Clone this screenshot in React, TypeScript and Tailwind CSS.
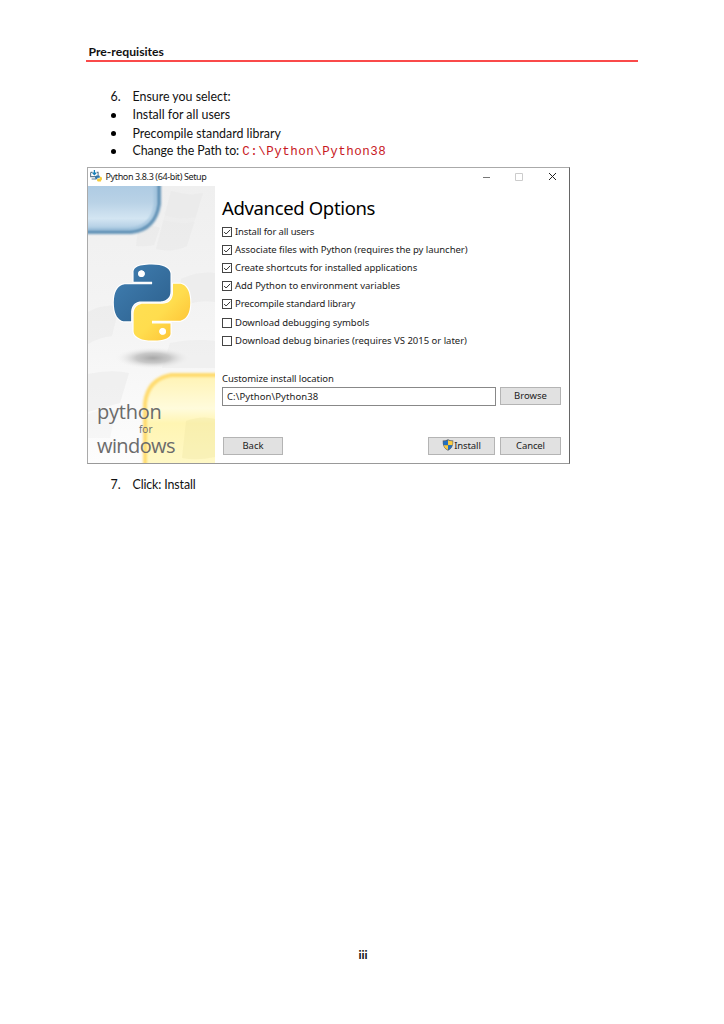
import React from "react";

const snake =
  "M14.25.18l.9.2.73.26.59.3.45.32.34.34.25.34.16.33.1.3.04.26.02.2-.01.13V8.5l-.05.63-.13.55-.21.46-.26.38-.3.31-.33.25-.35.19-.35.14-.33.1-.3.07-.26.04-.21.02H8.77l-.69.05-.59.14-.5.22-.41.27-.33.32-.27.35-.2.36-.15.37-.1.35-.07.32-.04.27-.02.21v3.06H3.17l-.21-.03-.28-.07-.32-.12-.35-.18-.36-.26-.36-.36-.35-.46-.32-.59-.28-.73-.21-.88-.14-1.05-.05-1.23.06-1.22.16-1.04.24-.87.32-.71.36-.57.4-.44.42-.33.42-.24.4-.16.36-.1.32-.05.24-.01h.16l.06.01h8.16v-.83H6.18l-.01-2.75-.02-.37.05-.34.11-.31.17-.28.25-.26.31-.23.38-.2.44-.18.51-.15.58-.12.64-.1.71-.06.77-.04.84-.02 1.27.05zm-6.3 1.98l-.23.33-.08.41.08.41.23.34.33.22.41.09.41-.09.33-.22.23-.34.08-.41-.08-.41-.23-.33-.33-.22-.41-.09-.41.09z";

function SidebarArt() {
  return (
    <svg className="absolute inset-0" width="127" height="277" viewBox="0 0 127 277">
      <defs>
        <linearGradient id="bg" x1="0" y1="0" x2="0" y2="1">
          <stop offset="0" stopColor="#efefef" />
          <stop offset=".5" stopColor="#f4f4f4" />
          <stop offset="1" stopColor="#fdfdfd" />
        </linearGradient>
        <linearGradient id="glass" x1="0" y1="0" x2="0" y2="1">
          <stop offset="0" stopColor="#a9c8e2" />
          <stop offset=".45" stopColor="#b9d2e6" />
          <stop offset=".75" stopColor="#d3e5f2" />
          <stop offset="1" stopColor="#a5c5df" />
        </linearGradient>
        <linearGradient id="gold" x1="0" y1="0" x2="0" y2="1">
          <stop offset="0" stopColor="#fff3b4" />
          <stop offset=".35" stopColor="#fffbdc" />
          <stop offset=".5" stopColor="#fff5b3" />
          <stop offset="1" stopColor="#fff9c9" />
        </linearGradient>
        <linearGradient id="blue" x1="0" y1="0" x2="1" y2="1">
          <stop offset="0" stopColor="#4180b3" />
          <stop offset="1" stopColor="#2c5f8c" />
        </linearGradient>
        <linearGradient id="yellow" x1="1" y1="1" x2="0" y2="0">
          <stop offset="0" stopColor="#ffe055" />
          <stop offset=".5" stopColor="#ffdd4e" />
          <stop offset="1" stopColor="#fdb92c" />
        </linearGradient>
        <radialGradient id="shadow">
          <stop offset="0" stopColor="#a8a8a8" />
          <stop offset=".45" stopColor="#c4c4c4" stopOpacity=".9" />
          <stop offset="1" stopColor="#f5f5f5" stopOpacity="0" />
        </radialGradient>
        <filter id="soft" x="-20%" y="-20%" width="140%" height="140%">
          <feGaussianBlur stdDeviation="1.3" />
        </filter>
        <pattern id="hatch" width="4" height="2" patternUnits="userSpaceOnUse" patternTransform="rotate(-38)">
          <path d="M0 1h4" stroke="#e0e0e0" strokeWidth=".5" />
        </pattern>
      </defs>
      <rect width="127" height="277" fill="url(#bg)" />
      <g fill="#ebebeb" opacity=".3">
        <path d="M83 5q18 5 32 2l-7 24q-16 4-32-2zM75 34q17 5 32 2l-8 24q-14 7-31 3zM50 43q12-6 22-1l-6 17q-9 2-18 1z" />
        <path d="M93 93q18-8 34-6v29q-19-3-36 6zM0 126q16-9 31-5l-7 29q-12 1-24 8zM0 188q23-5 41-1l-9 30q-16 4-32 9zM82 157q24-5 45-2v27H74zM0 228q14-6 28-4l-6 28H0z" />
      </g>
      <path
        fill="url(#hatch)"
        opacity=".7"
        d="M83 5q18 5 32 2l-16 53q-14 7-31 3zM50 43q12-6 22-1l-6 17q-9 2-18 1zM93 93q18-8 34-6v29q-19-3-36 6zM0 126q16-9 31-5l-7 29q-12 1-24 8zM0 188q23-5 41-1l-9 30q-16 4-32 9zM82 157q24-5 45-2v27H74z"
      />
      <path d="M-5-8H71V18Q67 43 43 46H-5Z" fill="url(#glass)" />
      <path d="M-5 46H43Q67 44 71 18V-5" fill="none" stroke="#6594b8" strokeWidth="4" filter="url(#soft)" />
      <path d="M-5 43H41Q64 41 67 18V-5" fill="none" stroke="#9abfda" strokeWidth="1.5" filter="url(#soft)" />
      <path d="M57 285V217Q60 193 83 189H135V285Z" fill="url(#gold)" />
      <path d="M98 235q16-6 29-2v38q-18 4-33 1z" fill="#efe6a4" opacity=".35" />
      <path d="M57 285V217Q60 193 83 189H135" fill="none" stroke="#ffdb70" strokeWidth="4" filter="url(#soft)" />
      <ellipse cx="65" cy="172" rx="38" ry="11" fill="url(#shadow)" />
      <g transform="translate(26 78.5) scale(3.17 3.17)">
        <path d={snake} fill="#fff" stroke="#fff" strokeWidth=".7" />
        <path d={snake} fill="#fff" stroke="#fff" strokeWidth=".7" transform="rotate(180 12 12)" />
        <path d={snake} fill="url(#blue)" />
        <path d={snake} fill="url(#yellow)" transform="rotate(180 12 12)" />
        <circle cx="8.62" cy="2.9" r="1" fill="#fff" />
        <circle cx="15.38" cy="21.1" r="1" fill="#fff" />
      </g>
    </svg>
  );
}

function SetupIcon() {
  return (
    <svg width="12" height="12" viewBox="0 0 12 12" className="relative -top-px shrink-0">
      <path d="M.6 2.4h2M6.6 2.4h1.5v4.2H.6V2.4M1.6 9h4.5" fill="none" stroke="#5d7c91" strokeWidth="1.1" />
      <path d="M4.4 0v4M2.7 2.8l1.7 1.7 1.7-1.7" fill="none" stroke="#1681b9" strokeWidth="1.3" />
      <path d="M6.2 5.6h2.6q1 0 1 1v1.2H7.4V9.2H6Q5 9 5 7.6t1.2-2z" fill="#3378aa" />
      <path d="M10 6.8h.8Q12 7 12 8.8t-1 1.8v.8H8q-1 0-1-1.3t1-1.6h2z" fill="#f6cc38" />
    </svg>
  );
}

function Shield() {
  return (
    <svg width="12" height="12" viewBox="0 0 12 12" className="relative -top-px shrink-0">
      <path d="M6 .3Q8 1.6 11.3 1.6 11.8 8.8 6 11.8.2 8.8.7 1.6 4 1.6 6 .3z" fill="#596069" />
      <path d="M6 1.2v5H1.5Q1.2 4 1.4 2.3 4.2 2.2 6 1.2z" fill="#2370c0" />
      <path d="M6 1.2v5h4.5Q10.8 4 10.6 2.3 7.8 2.2 6 1.2z" fill="#fbcc42" />
      <path d="M6 6.2v4.8Q2.4 9.2 1.6 6.2z" fill="#fbcc42" />
      <path d="M6 6.2v4.8Q9.6 9.2 10.4 6.2z" fill="#2370c0" />
    </svg>
  );
}

const options = [
  { text: "Install for all users", on: true, spacing: "tracking-[-0.14px]" },
  { text: "Associate files with Python (requires the py launcher)", on: true, spacing: "tracking-[-0.05px]" },
  { text: "Create shortcuts for installed applications", on: true, spacing: "tracking-[-0.08px]" },
  { text: "Add Python to environment variables", on: true, spacing: "tracking-[-0.02px]" },
  { text: "Precompile standard library", on: true, spacing: "tracking-[-0.12px]" },
  { text: "Download debugging symbols", on: false, spacing: "tracking-[-0.06px]" },
  { text: "Download debug binaries (requires VS 2015 or later)", on: false, spacing: "tracking-[-0.01px]" },
];

function Option({ text, on, spacing }: { text: string; on: boolean; spacing: string }) {
  return (
    <label className="flex h-[18.1px] items-center gap-[3px]">
      <svg width="10" height="10" viewBox="0 0 10 10" className="shrink-0">
        <rect x=".5" y=".5" width="9" height="9" fill="#fff" stroke="#444" />
        {on && <path d="m2.1 5 2 2L8.2 2.8" fill="none" stroke="#333" strokeWidth="1" />}
      </svg>
      <span className={"whitespace-nowrap " + spacing}>{text}</span>
    </label>
  );
}

function Button({ children, className }: { children: React.ReactNode; className: string }) {
  return (
    <button className={"flex h-[18px] items-center justify-center border border-[#b4b4b4] bg-[#e1e1e1] pt-px " + className}>
      {children}
    </button>
  );
}

function Dialog() {
  return (
    <section className="ml-[87px] flex h-[297px] w-[483px] shrink-0 flex-col border border-t-[#aaa] border-r-[#666] border-b-[#999] border-l-[#aaa] bg-white font-['Noto_Sans','Open_Sans',sans-serif] text-[9.5px] leading-[14px] text-[#222]">
      <header className="flex h-[18px] shrink-0 items-center pl-[2px] text-[9px]">
        <SetupIcon />
        <span className="ml-[3.5px] grow whitespace-nowrap tracking-[-0.38px]">Python 3.8.3 (64-bit) Setup</span>
        <svg width="74" height="10" viewBox="0 0 74 10" className="mr-[13px]">
          <path d="M1 5.5h7" stroke="#777" />
          <path d="M33.5 1.5h7v7h-7z" fill="none" stroke="#ccc" />
          <path d="m67 1 7 7m0-7-7 7" stroke="#222" />
        </svg>
      </header>
      <div className="flex min-h-0 grow">
        <aside className="relative w-[127px] shrink-0 overflow-hidden">
          <SidebarArt />
          <div className="absolute top-[212px] left-[9px] font-['Open_Sans','Noto_Sans',sans-serif] text-[#6b6b6b]">
            <div className="h-[25px] text-[20px] leading-[28px] tracking-[-0.25px]">python</div>
            <div className="h-[9px] pl-[42px] text-[10px] leading-[12px]">for</div>
            <div className="h-[25px] text-[20px] leading-[27px] tracking-[-0.6px]">windows</div>
          </div>
        </aside>
        <main className="flex grow flex-col pt-[10px] pr-[8px] pl-[7px]">
          <h1 className="h-[27px] text-[18.5px] leading-[24px] tracking-[-0.35px] text-black">Advanced Options</h1>
          <div>
            {options.map((o) => (
              <Option key={o.text} {...o} />
            ))}
          </div>
          <div className="mt-[22px] h-[14px] tracking-[-0.08px]">Customize install location</div>
          <div className="mt-[1px] flex items-start justify-between">
            <div className="flex h-[19px] w-[274px] items-center border border-[#888] bg-white pt-px pl-[4px] tracking-[0.1px]">
              C:\Python\Python38
            </div>
            <Button className="w-[61px]">Browse</Button>
          </div>
          <div className="mt-[31px] flex gap-[5px] pl-px">
            <Button className="mr-auto w-[60px]">Back</Button>
            <Button className="w-[67px]">
              <Shield />
              <span className="tracking-[-0.1px]">Install</span>
            </Button>
            <Button className="w-[61px] tracking-[-0.1px]">Cancel</Button>
          </div>
        </main>
      </div>
    </section>
  );
}

function Item({ mark, children }: { mark: string; children: React.ReactNode }) {
  return (
    <li className="flex h-[18.3px] items-center pl-[110.5px]">
      {mark === "•" ? (
        <span className="mr-[16.5px] ml-[0.5px] h-[5px] w-[5px] rounded-full bg-black" />
      ) : (
        <span className="w-[22px]">{mark}</span>
      )}
      <span className="whitespace-nowrap">{children}</span>
    </li>
  );
}

export default function App() {
  return (
    <div className="flex h-[1024px] w-[724px] flex-col bg-white font-['Lato',sans-serif] text-[12.4px] leading-[18px] text-[#111]">
      <header className="mr-[86px] ml-[86px] h-[62px] shrink-0 border-b-2 border-[#fa4a4a] pt-[43px] pl-[2.5px] text-[12.2px] font-bold">
        Pre-requisites
      </header>
      <ul className="mt-[25.9px] h-[79.1px] shrink-0">
        <Item mark="6.">Ensure you select:</Item>
        <Item mark="•">Install for all users</Item>
        <Item mark="•">Precompile standard library</Item>
        <Item mark="•">
          <span className="tracking-[-0.06px]">Change the Path to: </span>
          <span className="font-['Liberation_Mono',monospace] text-[12.5px] tracking-[0.5px] text-[#c8181e]">C:\Python\Python38</span>
        </Item>
      </ul>
      <Dialog />
      <ol className="mt-[11.9px] shrink-0">
        <Item mark="7.">
          <span className="tracking-[-0.12px]">Click: Install</span>
        </Item>
      </ol>
      <footer className="mt-auto mb-[60px] pl-[2px] text-center text-[12px] font-bold">iii</footer>
    </div>
  );
}
